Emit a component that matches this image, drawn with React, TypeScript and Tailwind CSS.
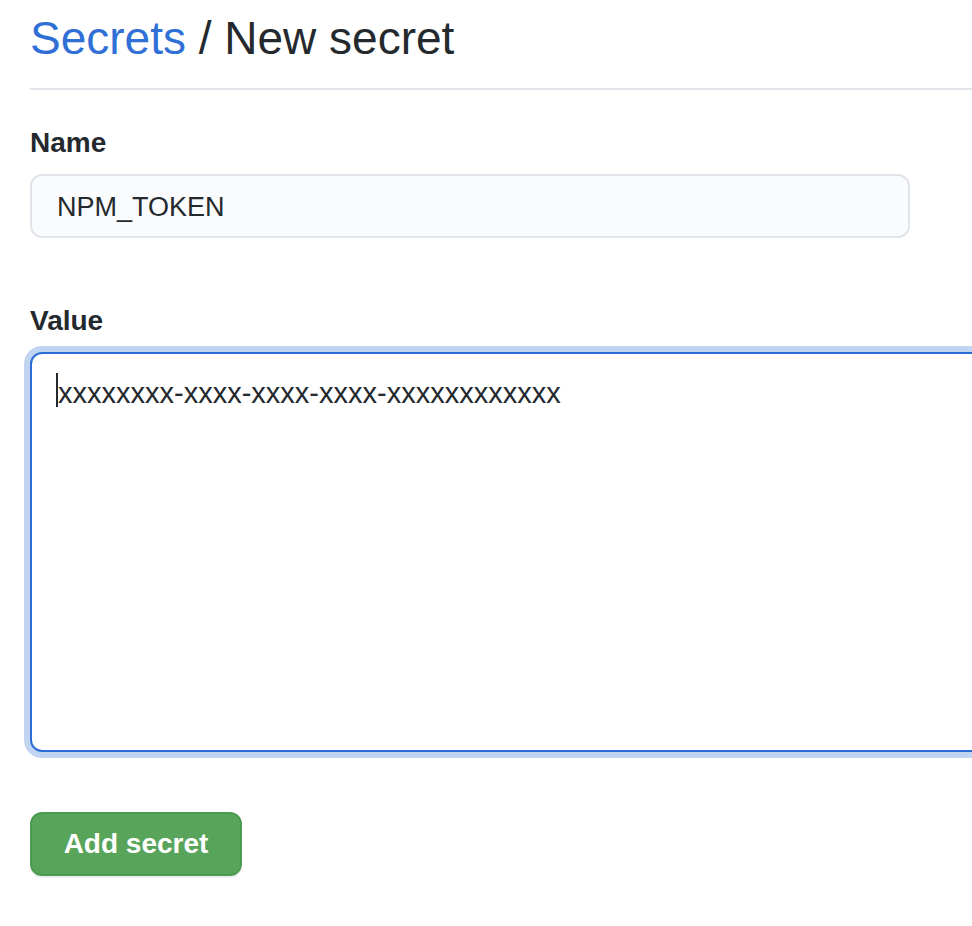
export default function App() {
  return (
    <div className="h-[926px] w-[972px] overflow-hidden bg-white pl-[30px] font-['Liberation_Sans',Arial,sans-serif] text-[#24292e]">
      {/* page header */}
      <div className="border-b-2 border-[#e1e4e8] pt-[8px] pb-[20px]">
        <h2 className="whitespace-nowrap text-[46px] font-normal leading-[60px]">
          <a href="#" className="text-[#2f6fd6]">
            Secrets
          </a>{" "}
          / New secret
        </h2>
      </div>

      <form className="flex flex-col">
        <label className="mt-[32px] mb-[10px] text-[28px] font-bold leading-[42px]">
          Name
        </label>
        <div className="flex h-[64px] w-[880px] items-center rounded-[12px] border-2 border-[#e1e4e8] bg-[#fafbfc] px-[25px] pt-[2px] text-[27px] leading-[40px]">
          NPM_TOKEN
        </div>

        <label className="mt-[62px] mb-[10px] text-[28px] font-bold leading-[42px]">
          Value
        </label>
        <div className="h-[400px] w-[1000px] shrink-0 rounded-[12px] border-2 border-[#2b6cd6] bg-white pt-[18px] pl-[24px] text-[29px] leading-[42px] ring-[6px] ring-[#c1d4f1]">
          <span className="inline-block h-[34px] w-[2px] bg-[#24292e] align-[-4px]" />
          xxxxxxxx-xxxx-xxxx-xxxx-xxxxxxxxxxxx
        </div>

        <div className="mt-[60px]">
          <button
            type="button"
            className="h-[64px] w-[212px] rounded-[12px] border-2 border-[#4c9a4f] bg-[#59a45b] text-[28px] font-bold text-white shadow-[0_2px_0_rgba(27,31,35,0.08)]"
          >
            Add secret
          </button>
        </div>
      </form>
    </div>
  );
}
